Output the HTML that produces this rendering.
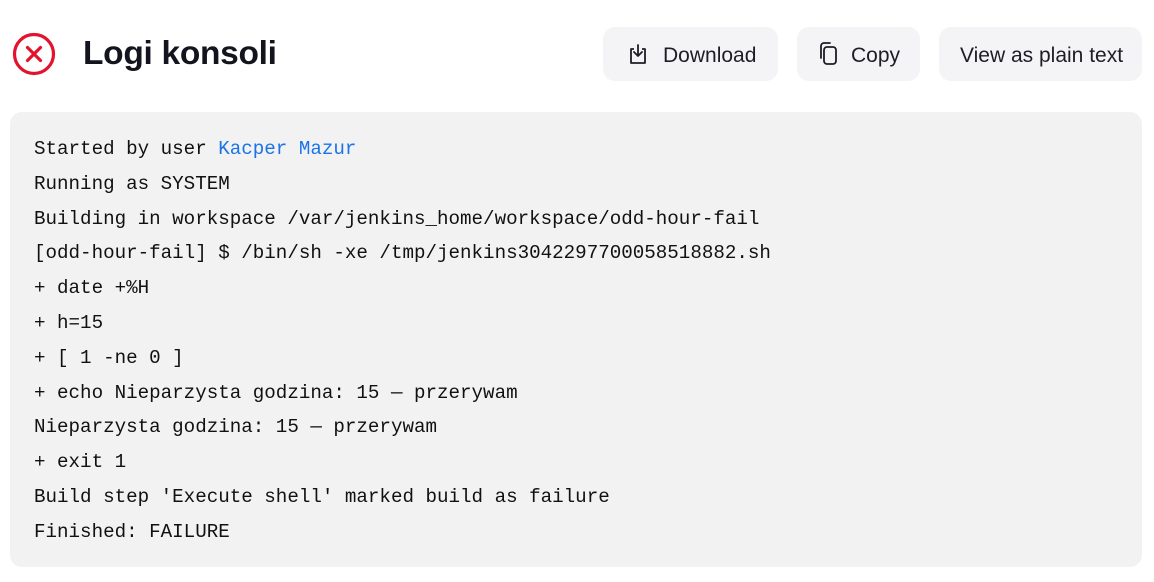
<!DOCTYPE html>
<html><head><style>
body{margin:0;width:1154px;height:582px;background:#fff;font-family:"Liberation Sans",sans-serif;position:relative;overflow:hidden}
.t{position:absolute;left:83px;top:35px;font-size:33.5px;font-weight:bold;color:#14141f;letter-spacing:-0.3px}
.b{position:absolute;top:27px;height:54px;background:#f4f4f6;border-radius:12px;font-size:21px;color:#1d1d26;display:flex;align-items:center;box-sizing:border-box;padding-top:3px}
.c{position:absolute;left:10px;top:112px;width:1132px;height:455px;background:#f2f2f2;border-radius:12px}
pre{position:absolute;left:34px;top:132px;margin:0;font-family:"Liberation Mono",monospace;font-size:19.2px;line-height:34.8px;color:#111}
a{color:#1a73e8;text-decoration:none}
</style></head><body>
<svg style="position:absolute;left:12px;top:32px" width="44" height="44" viewBox="0 0 44 44"><circle cx="22" cy="22" r="19.5" fill="none" stroke="#e3132d" stroke-width="3.2"/><path d="M15.5 15.5L28.5 28.5M28.5 15.5L15.5 28.5" stroke="#e3132d" stroke-width="3.2" stroke-linecap="round"/></svg>
<div class="t">Logi konsoli</div>
<div class="b" style="left:603px;width:175px;padding-left:24px"><svg width="22" height="24" viewBox="0 0 22 24" style="margin-right:14px;margin-top:-3px"><path d="M7 7H4v14h14V7h-3" fill="none" stroke="#1d1d26" stroke-width="1.8" stroke-linejoin="round"/><path d="M11 3v11M7 10l4 4 4-4" fill="none" stroke="#1d1d26" stroke-width="1.8" stroke-linecap="round" stroke-linejoin="round"/></svg>Download</div>
<div class="b" style="left:797px;width:123px;padding-left:20px"><svg width="24" height="28" viewBox="0 0 24 28" style="margin-right:10px;margin-top:-3px"><rect x="7" y="7" width="12" height="17" rx="3" fill="none" stroke="#1d1d26" stroke-width="1.8"/><path d="M4 18V6a3 3 0 0 1 3-3h6" fill="none" stroke="#1d1d26" stroke-width="1.8" stroke-linecap="round"/></svg>Copy</div>
<div class="b" style="left:939px;width:203px;padding-left:21px">View as plain text</div>
<div class="c"></div>
<pre>Started by user <a>Kacper Mazur</a>
Running as SYSTEM
Building in workspace /var/jenkins_home/workspace/odd-hour-fail
[odd-hour-fail] $ /bin/sh -xe /tmp/jenkins3042297700058518882.sh
+ date +%H
+ h=15
+ [ 1 -ne 0 ]
+ echo Nieparzysta godzina: 15 — przerywam
Nieparzysta godzina: 15 — przerywam
+ exit 1
Build step 'Execute shell' marked build as failure
Finished: FAILURE</pre>
</body></html>
